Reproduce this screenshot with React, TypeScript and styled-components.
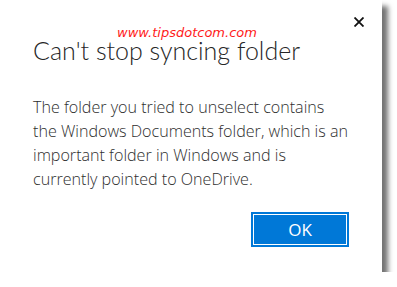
import React from "react";
import styled, { createGlobalStyle } from "styled-components";

const GlobalStyle = createGlobalStyle`
  html,
  body {
    background-color: #ffffff;
    margin: 0;
    padding: 0;
  }

  * {
    box-sizing: border-box;
  }
`;

const Dialog = styled.div`
  background-color: #ffffff;
  box-shadow: 6px 6px 5px rgba(0, 0, 0, 0.55);
  display: flex;
  flex-direction: column;
  font-family: "Open Sans", "Liberation Sans", sans-serif;
  height: 272px;
  position: relative;
  width: 382px;
`;

const TopBar = styled.div`
  display: flex;
  height: 40px;
  justify-content: flex-end;
  padding: 12px 13px 0 0;
`;

const CloseButton = styled.button`
  align-items: center;
  background: none;
  border: none;
  cursor: pointer;
  display: flex;
  height: 20px;
  justify-content: center;
  padding: 0;
  width: 20px;
`;

const Watermark = styled.span`
  color: #ff1a1a;
  font-family: "DejaVu Sans", sans-serif;
  font-size: 13px;
  font-style: italic;
  left: 117px;
  line-height: 11px;
  position: absolute;
  top: 27px;
`;

const Title = styled.h1`
  color: #262626;
  font-family: Lato, "Open Sans", sans-serif;
  font-size: 25px;
  font-weight: 300;
  line-height: 20px;
  margin: 0 33px;
`;

const Message = styled.p`
  color: #2e2e2e;
  font-size: 16.1px;
  font-weight: 300;
  line-height: 24px;
  margin: 35px 33px 0;
  white-space: nowrap;
`;

const Footer = styled.div`
  display: flex;
  justify-content: flex-end;
  margin-top: 21px;
  padding: 0 33px;
`;

const OkButton = styled.button`
  background-color: #0078d7;
  border: 2px solid #0078d7;
  box-shadow: inset 0 0 0 1px #ffffff;
  color: #ffffff;
  cursor: pointer;
  font-family: "Open Sans", "Liberation Sans", sans-serif;
  font-size: 17px;
  height: 35px;
  line-height: 1;
  padding: 0;
  width: 98px;
`;

const App = () => {
  return (
    <>
      <GlobalStyle />
      <Dialog>
        <TopBar>
          <CloseButton aria-label="Close">
            <svg width="10" height="10" viewBox="0 0 10 10">
              <path
                d="M0.5 0.5L9.5 9.5M9.5 0.5L0.5 9.5"
                stroke="#111111"
                strokeWidth={1.8}
              />
            </svg>
          </CloseButton>
        </TopBar>
        <Watermark>www.tipsdotcom.com</Watermark>
        <Title>Can't stop syncing folder</Title>
        <Message>
          The folder you tried to unselect contains
          <br />
          the Windows Documents folder, which is an
          <br />
          important folder in Windows and is
          <br />
          currently pointed to OneDrive.
        </Message>
        <Footer>
          <OkButton>OK</OkButton>
        </Footer>
      </Dialog>
    </>
  );
};

export default App;
